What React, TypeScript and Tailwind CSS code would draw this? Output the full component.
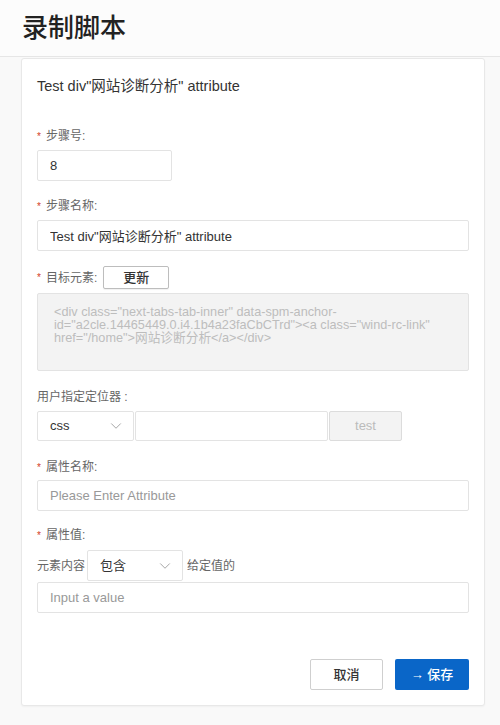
import React, { useState } from 'react';
import { ChevronDown } from 'lucide-react';

const font = { fontFamily: '"Liberation Sans", "Noto Sans CJK SC", sans-serif' };

const Label: React.FC<{ text: string; required?: boolean }> = ({ text, required }) => (
  <div className="flex h-5 shrink-0 items-center whitespace-nowrap text-[12px] text-[#666]">
    {required && <span className="mr-[5px] text-[10px] text-[#d23c26]">*</span>}
    {text}
  </div>
);

const App: React.FC = () => {
  const [stepNo, setStepNo] = useState('8');
  const [stepName, setStepName] = useState('Test div"网站诊断分析" attribute');

  return (
    <div className="min-h-[725px] bg-[#f9f9f9] text-[#333]" style={font}>
      {/* Header */}
      <div className="flex h-[57px] items-center border-b border-[#e6e6e6] bg-[#fcfcfc] px-[22px]">
        <h1 className="text-[26px] font-medium leading-none text-[#222]">录制脚本</h1>
      </div>

      {/* Card */}
      <div className="mx-[21px] mt-px w-[464px] rounded-[3px] border border-[#e8e8e8] bg-white px-[15px] pb-[15px] pt-[17px] shadow-[0_1px_2px_rgba(0,0,0,0.04)]">
        <div className="h-5 text-[14.5px] leading-5 text-[#333]">Test div"网站诊断分析" attribute</div>

        {/* 步骤号 */}
        <div className="mt-[30px]">
          <Label text="步骤号:" required />
          <input
            value={stepNo}
            onChange={(e) => setStepNo(e.target.value)}
            className="mt-1 h-[31px] w-[135px] rounded-[2px] border border-[#e3e3e3] px-3 text-[13px] text-[#333] outline-none"
          />
        </div>

        {/* 步骤名称 */}
        <div className="mt-[15px]">
          <Label text="步骤名称:" required />
          <input
            value={stepName}
            onChange={(e) => setStepName(e.target.value)}
            className="mt-1 h-[31px] w-full rounded-[2px] border border-[#e3e3e3] px-3 text-[13px] text-[#333] outline-none"
          />
        </div>

        {/* 目标元素 */}
        <div className="mt-[15px]">
          <div className="flex h-[23px] items-center">
            <Label text="目标元素:" required />
            <button className="ml-[6px] h-[23px] w-[66px] rounded-[2px] border border-[#bdbdbd] bg-white text-[13px] font-medium text-[#333] shadow-[0_1px_1px_rgba(0,0,0,0.06)]">
              更新
            </button>
          </div>
          <div className="mt-[4px] h-[78px] w-full rounded-[2px] border border-[#e3e3e3] bg-[#f3f3f3] px-4 pt-[12px] text-[12.7px] leading-[13px] text-[#bdbdbd]">
            {'<div class="next-tabs-tab-inner" data-spm-anchor-id="a2cle.14465449.0.i4.1b4a23faCbCTrd"><a class="wind-rc-link" href="/home">网站诊断分析</a></div>'}
          </div>
        </div>

        {/* 用户指定定位器 */}
        <div className="mt-[16px]">
          <Label text="用户指定定位器 :" />
          <div className="mt-1 flex h-[30px]">
            <div className="flex w-[97px] items-center justify-between rounded-[2px] border border-[#e3e3e3] pl-3 pr-[8px] text-[13px] text-[#333]">
              css
              <ChevronDown className="h-[18px] w-[18px] text-[#888]" strokeWidth={1} />
            </div>
            <input className="ml-px w-[193px] rounded-[2px] border border-[#e3e3e3] px-3 text-[13px] outline-none" />
            <button className="ml-px w-[73px] rounded-[2px] border border-[#dcdcdc] bg-[#f3f3f3] text-[13px] text-[#bbb]">
              test
            </button>
          </div>
        </div>

        {/* 属性名称 */}
        <div className="mt-[16px]">
          <Label text="属性名称:" required />
          <input
            placeholder="Please Enter Attribute"
            className="mt-[3px] h-[31px] w-full rounded-[2px] border border-[#e3e3e3] px-3 text-[13px] text-[#333] outline-none placeholder:text-[#999]"
          />
        </div>

        {/* 属性值 */}
        <div className="mt-[14px]">
          <Label text="属性值:" required />
          <div className="mt-[5px] flex h-[31px] items-center text-[12px] text-[#666]">
            <span className="w-[50px] shrink-0 whitespace-nowrap">元素内容</span>
            <div className="flex h-full w-[96px] shrink-0 items-center justify-between rounded-[2px] border border-[#e3e3e3] pl-[12px] pr-[8px] text-[13px] text-[#333]">
              包含
              <ChevronDown className="h-[18px] w-[18px] text-[#888]" strokeWidth={1} />
            </div>
            <span className="ml-[4px] whitespace-nowrap">给定值的</span>
          </div>
          <input
            placeholder="Input a value"
            className="mt-px h-[31px] w-full rounded-[2px] border border-[#e3e3e3] px-3 text-[13px] text-[#333] outline-none placeholder:text-[#999]"
          />
        </div>

        {/* Footer buttons */}
        <div className="mt-[46px] flex justify-end gap-3">
          <button className="h-[31px] w-[73px] rounded-[2px] border border-[#cfcfcf] bg-white text-[13px] font-medium text-[#333]">
            取消
          </button>
          <button className="h-[31px] w-[74px] rounded-[2px] bg-[#0a66c8] text-[13px] font-medium text-white">
            <span className="font-normal">→</span> 保存
          </button>
        </div>
      </div>
    </div>
  );
};

export default App;
